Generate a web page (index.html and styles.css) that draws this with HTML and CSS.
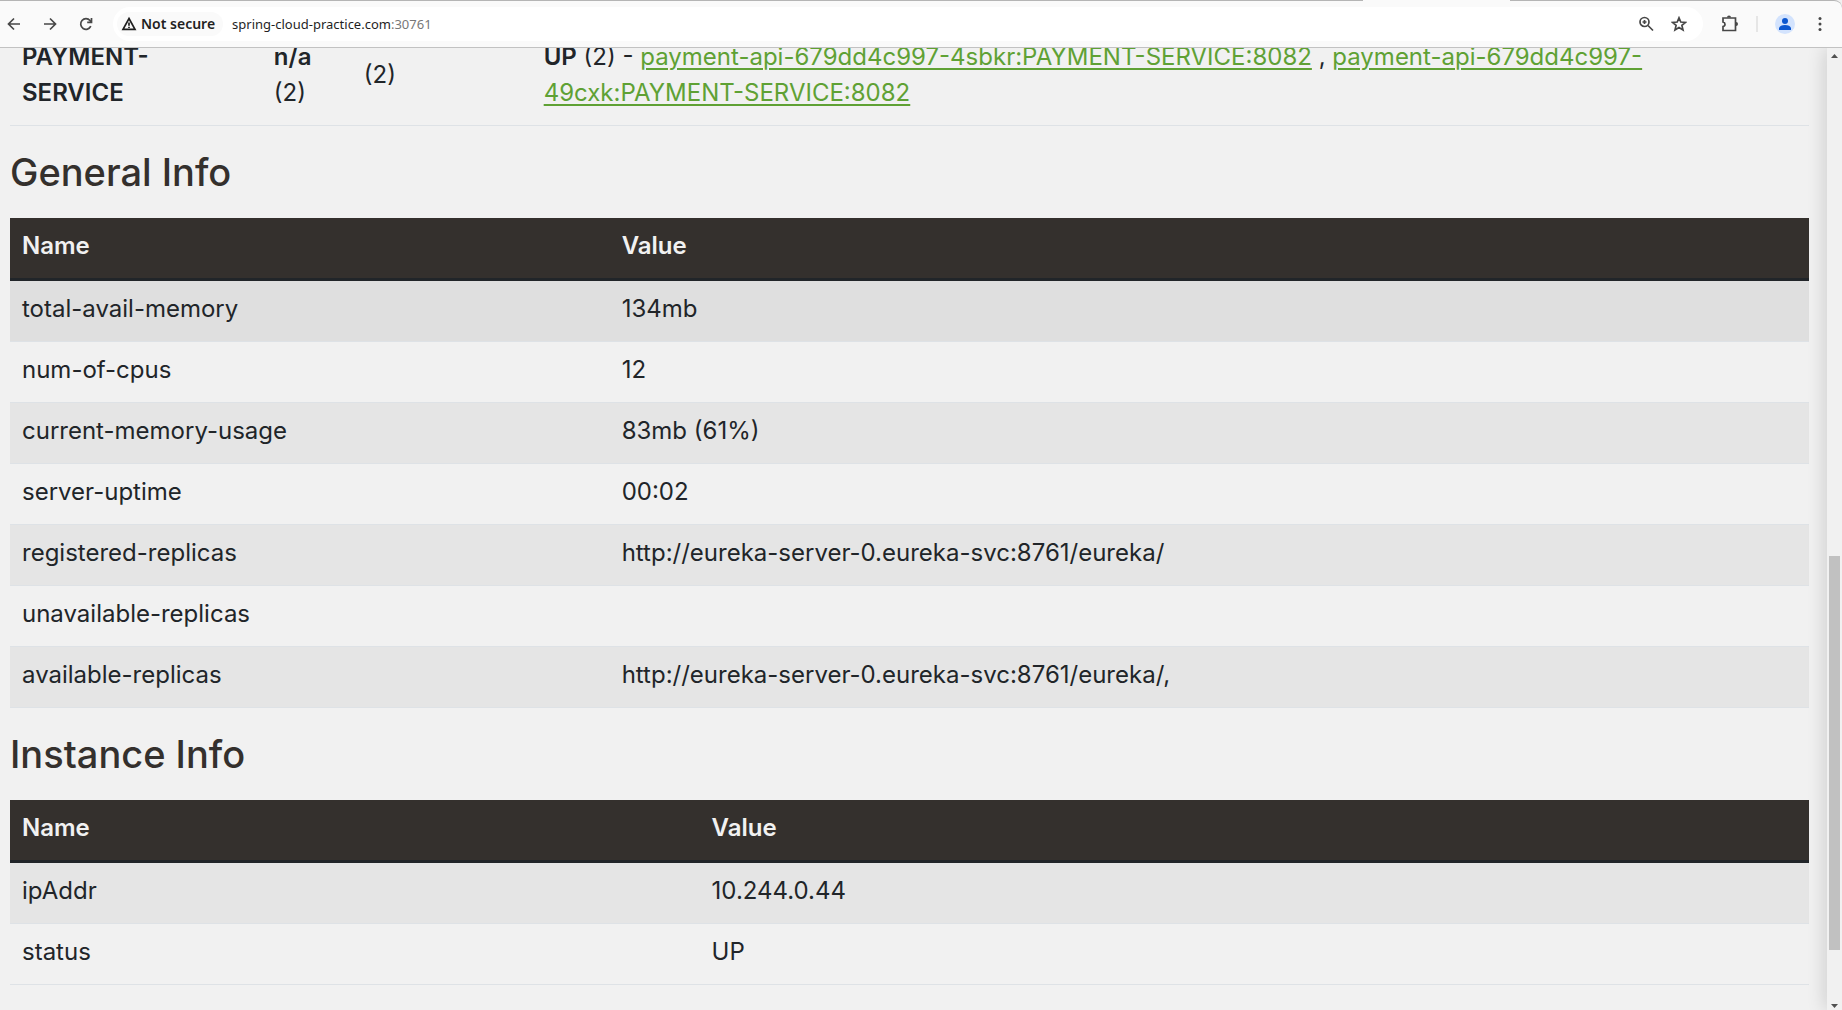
FILE: index.html
```html
<!DOCTYPE html>
<html lang="en">
<head>
<meta charset="utf-8">
<title>Eureka</title>
<link rel="stylesheet" href="styles.css">
</head>
<body>
<header class="toolbar">
  <nav class="nav" aria-label="Navigation">
    <button class="tool" aria-label="Back"><svg width="16" height="16" viewBox="0 0 16 16"><path d="M14 8H3M8 2.500 2.500 8 8 13.500"/></svg></button>
    <button class="tool" aria-label="Forward"><svg width="16" height="16" viewBox="0 0 16 16"><path d="M2 8h11M8 2.500 13.500 8 8 13.500"/></svg></button>
    <button class="tool" aria-label="Reload"><svg width="16" height="16" viewBox="0 0 16 16"><path d="M12.800 10.200A5.300 5.300 0 1 1 12 4.500L13.500 6M13.500 2v4.300H9.200"/></svg></button>
  </nav>
  <div class="address">
    <button class="chip"><svg width="16" height="16" viewBox="0 0 16 16"><path d="M8 2.500 14 13.300H2zM8 6.500v3.200M8 10.700v1.300"/></svg>Not secure</button>
    <div class="url">spring-cloud-practice.com<span class="port">:30761</span></div>
    <button class="tool" aria-label="Zoom"><svg width="16" height="16" viewBox="0 0 16 16"><circle cx="6.500" cy="6" r="4.500"/><path d="M10 9.500l5 5M4.500 6h4M6.500 4v4"/></svg></button>
    <button class="tool" aria-label="Bookmark"><svg width="16" height="16" viewBox="0 0 16 16"><path d="M8 1.800 9.800 6l4.700.4-3.600 3 1.100 4.600L8 11.500 4 14l1.100-4.600-3.600-3L6.200 6z"/></svg></button>
  </div>
  <div class="actions">
    <button class="tool" aria-label="Extensions"><svg width="18" height="18" viewBox="0 0 18 18"><path d="M2 3h12.500v12.500H2v-4q2-.3 2-2.200T2 7z"/><path class="solid" d="M6 2.500a2 2 0 0 1 4 0zM15 7a2 2 0 0 1 0 4z"/></svg></button>
    <span class="divider"></span>
    <button class="tool profile" aria-label="Profile"><svg width="20" height="20" viewBox="0 0 20 20"><circle class="disc" cx="10" cy="10" r="10"/><circle class="person" cx="10" cy="7" r="3"/><path class="person" d="M4 16v-2q1-3 6-3t6 3v2z"/></svg></button>
    <button class="tool" aria-label="Menu"><svg width="16" height="16" viewBox="0 0 16 16"><g class="solid"><circle cx="8" cy="2.500" r="1.500"/><circle cx="8" cy="8" r="1.500"/><circle cx="8" cy="13.500" r="1.500"/></g></svg></button>
  </div>
</header>
<div class="viewport">
  <main class="page">
    <table class="apps">
      <colgroup><col class="app"><col class="amis"><col class="zones"><col></colgroup>
      <tbody>
        <tr>
          <td><b>PAYMENT-<br>SERVICE</b></td>
          <td><b>n/a</b> (2)</td>
          <td>(2)</td>
          <td><b>UP</b> (2) - <a href="#">payment-api-679dd4c997-4sbkr:PAYMENT-SERVICE:8082</a> , <a href="#">payment-api-679dd4c997-<br>49cxk:PAYMENT-SERVICE:8082</a></td>
        </tr>
      </tbody>
    </table>
    <h1>General Info</h1>
    <table class="info">
      <colgroup><col class="general"><col></colgroup>
      <thead><tr><th>Name</th><th>Value</th></tr></thead>
      <tbody>
        <tr class="hovered"><td>total-avail-memory</td><td>134mb</td></tr>
        <tr><td>num-of-cpus</td><td>12</td></tr>
        <tr><td>current-memory-usage</td><td>83mb (61%)</td></tr>
        <tr><td>server-uptime</td><td>00:02</td></tr>
        <tr><td>registered-replicas</td><td>http://eureka-server-0.eureka-svc:8761/eureka/</td></tr>
        <tr><td>unavailable-replicas</td><td></td></tr>
        <tr><td>available-replicas</td><td>http://eureka-server-0.eureka-svc:8761/eureka/,</td></tr>
      </tbody>
    </table>
    <h1>Instance Info</h1>
    <table class="info">
      <colgroup><col class="instance"><col></colgroup>
      <thead><tr><th>Name</th><th>Value</th></tr></thead>
      <tbody>
        <tr><td>ipAddr</td><td>10.244.0.44</td></tr>
        <tr><td>status</td><td>UP</td></tr>
      </tbody>
    </table>
  </main>
  <div class="scrollbar">
    <svg width="15" height="16" viewBox="0 0 15 16"><path d="M4 10h7L7.500 6z"/></svg>
    <div class="track"><div class="thumb"></div></div>
    <svg width="15" height="16" viewBox="0 0 15 16"><path d="M4 10h7l-3.500 4z"/></svg>
  </div>
</div>
</body>
</html>
```
FILE: styles.css
```css
* { box-sizing: border-box; }

body {
  margin: 0;
  height: 100vh;
  display: flex;
  flex-direction: column;
  overflow: hidden;
  background: #f1f1f1;
  color: #212529;
  font: 24px/36px Inter, sans-serif;
}

svg { display: block; fill: none; stroke: #474747; stroke-width: 1.7; }
svg .solid { fill: #474747; stroke: none; }

/* Browser toolbar */
.toolbar {
  position: relative;
  flex: none;
  display: flex;
  align-items: center;
  height: 48px;
  padding: 0 14px 0 6px;
  background: #fafafa;
  border-top: 1px solid #b5b5b5;
  border-bottom: 1px solid #c2c2c2;
  border-top-right-radius: 8px;
  font: 13px/20px "Noto Sans", sans-serif;
}

/* The active tab opens into the toolbar */
.toolbar::before {
  content: "";
  position: absolute;
  top: -1px;
  left: 74%;
  width: 8%;
  height: 1px;
  background: #fafafa;
}

button { padding: 0; border: 0; background: none; font: inherit; color: inherit; }

.nav { display: flex; gap: 20px; margin-right: 19px; }

.address {
  flex: 1;
  display: flex;
  align-items: center;
  gap: 17px;
  height: 34px;
  padding: 0 16px 0 4px;
  border-radius: 17px;
  background: #fff;
}

.chip {
  display: flex;
  align-items: center;
  gap: 4px;
  height: 24px;
  padding: 0 8px 0 4px;
  border-radius: 12px;
  background: #fafafa;
  color: #1f1f1f;
  font-size: 14px;
  font-weight: 600;
}
.chip svg { stroke: #1f1f1f; }

.url { flex: 1; margin-left: -8px; color: #1f1f1f; }
.port { color: #777; }

.actions { display: flex; align-items: center; gap: 17px; margin-left: 18px; }
.divider { width: 2px; height: 16px; background: #e6e6e6; }
.profile svg { stroke: none; }
.disc { fill: #d3e3fd; }
.person { fill: #0b57d0; }

/* Page area */
.viewport { flex: 1; min-height: 0; display: flex; }
.page { flex: 1; min-width: 0; padding: 0 18px 0 10px; overflow: hidden; }

h1 {
  margin: 24px 0;
  color: #34302d;
  font: 500 38px/44px Inter, sans-serif;
}

table { width: 100%; border-collapse: separate; border-spacing: 0; table-layout: fixed; }
td, th { padding: 10px 12px 14px; text-align: left; vertical-align: top; }
td { height: 61px; border-bottom: 1px solid #dee2e6; }
b, th { font-weight: 600; }

/* The first table is scrolled partly under the toolbar */
.apps { margin-top: -19px; }
.apps td { vertical-align: middle; }
.app { width: 14%; }
.amis { width: 5%; }
.zones { width: 10%; }
a { color: #5fa134; text-decoration-thickness: 2px; text-underline-offset: 3px; }

.general { width: 33.333%; }
.instance { width: 38.333%; }
.info th { background: #34302d; color: #f1f1f1; border-bottom: 3px solid #212529; }
.info tbody tr:nth-child(odd) { background: #e5e5e5; }
.info tbody tr.hovered:nth-child(odd) { background: #dfdfdf; }

/* Scrollbar */
.scrollbar {
  flex: none;
  width: 15px;
  display: flex;
  flex-direction: column;
  background: #f1f1f1;
  box-shadow: 0 0 20px rgba(0, 0, 0, .2);
}
.scrollbar svg { fill: #505050; stroke: none; }
.track { flex: 1; display: flex; flex-direction: column; padding: 0 2px; }
.thumb { height: 42.400%; margin-top: auto; background: #c1c1c1; }
.track::after { content: ""; height: 4.700%; }
```
